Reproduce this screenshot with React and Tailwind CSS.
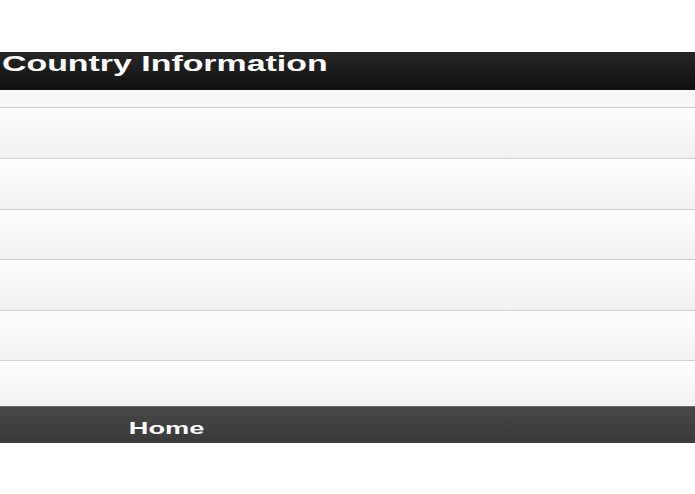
export default function App() {
  const rows = [51, 51, 50, 51, 50];

  return (
    <div className="w-[695px] h-[494px] bg-white overflow-hidden" style={{ fontFamily: '"Liberation Sans", Arial, sans-serif' }}>
      <div className="h-[52px]" />
      <div className="h-[38px] bg-gradient-to-b from-[#272727] to-[#101010] flex items-start pl-[2px] pt-[1px]">
        <h1 className="text-white font-bold text-[22px] leading-none origin-left scale-x-[1.54] whitespace-nowrap">
          Country Information
        </h1>
      </div>
      <div className="h-[18px] bg-[#f6f6f6] border-b border-[#cccccc]" />
      {rows.map((h, i) => (
        <div
          key={i}
          className="bg-gradient-to-b from-[#fefefe] to-[#f1f1f1] border-b border-[#cfcfcf]"
          style={{ height: h }}
        />
      ))}
      <div className="h-[45px] bg-gradient-to-b from-[#fefefe] to-[#f3f3f3]" />
      <div className="h-[37px] border-t border-[#6a6a6a] bg-gradient-to-b from-[#474747] to-[#3a3a3a] flex">
        <div className="w-[334px] flex items-center justify-center">
          <span className="text-white font-bold text-[17px] leading-none scale-x-[1.6] mt-[6px]">Home</span>
        </div>
      </div>
    </div>
  );
}
